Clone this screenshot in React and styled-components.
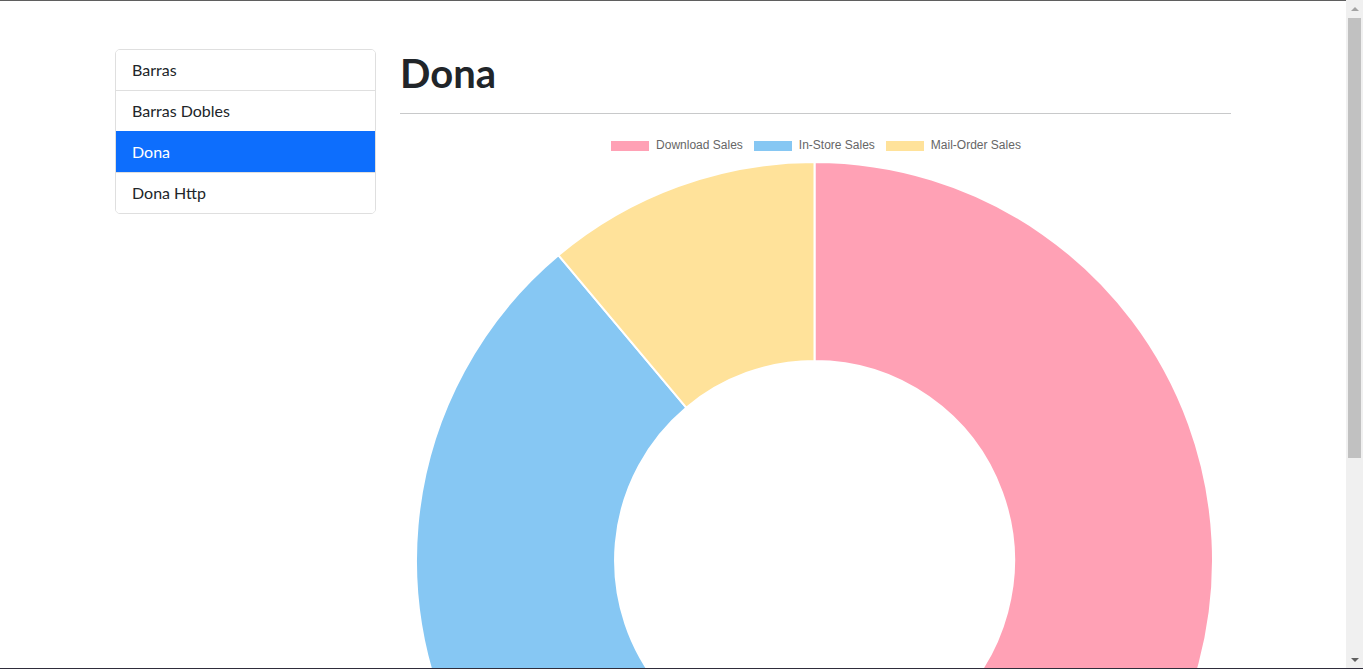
import React from "react";
import styled, { createGlobalStyle } from "styled-components";

const GlobalStyle = createGlobalStyle`
  *, *::before, *::after { box-sizing: border-box; }
  html { background: #fff; }
  body {
    margin: 0;
    padding-right: 17px;
    border-top: 1px solid #5f5f5f;
    font-family: "Lato", "Noto Sans", sans-serif;
    font-size: 16px;
    line-height: 1.5;
    color: #212529;
    background: #fff;
  }
`;

/* Window chrome seen in the screenshot: classic scrollbar + bottom frame edge */
const ScrollTrack = styled.div`
  position: fixed;
  top: 0;
  right: 0;
  bottom: 1px;
  width: 17px;
  background: #f0f0f0;
  display: flex;
  flex-direction: column;
  z-index: 10;
`;

const ScrollButton = styled.div`
  flex: 0 0 17px;
  display: flex;
  align-items: center;
  justify-content: center;
  &::before {
    content: "";
    width: 0;
    height: 0;
    border-left: 4px solid transparent;
    border-right: 4px solid transparent;
    ${(p) =>
      p.$down
        ? "border-top: 4px solid #606060;"
        : "border-bottom: 4px solid #a3a3a3;"}
  }
`;

const ScrollThumb = styled.div`
  height: 440px;
  margin: 1px 2px 0;
  background: #c1c1c1;
`;

const ScrollSpacer = styled.div`
  flex: 1;
`;

const FrameEdge = styled.div`
  position: fixed;
  left: 0;
  right: 0;
  bottom: 0;
  height: 1px;
  background: #2f2d3b;
  z-index: 11;
`;

const Container = styled.div`
  width: 100%;
  max-width: 1140px;
  margin: 48px auto 0;
  padding: 0 12px;
`;

const Row = styled.div`
  display: flex;
  margin: 0 -12px;
`;

const Col = styled.div`
  flex: 0 0 ${(p) => p.$span}%;
  max-width: ${(p) => p.$span}%;
  padding: 0 12px;
`;

const ListGroup = styled.ul`
  list-style: none;
  margin: 0;
  padding: 0;
  border: 1px solid #dfdfdf;
  border-radius: 5px;
  overflow: hidden;
`;

const ListItem = styled.li`
  padding: 8px 16px;
  font-size: 16px;
  line-height: 24px;
  cursor: pointer;
  color: ${(p) => (p.$active ? "#fff" : "#212529")};
  background: ${(p) => (p.$active ? "#0d6efd" : "#fff")};
  border-top: 1px solid ${(p) => (p.$active ? "#0d6efd" : "#dfdfdf")};
  &:first-child { border-top: 0; }
`;

const Title = styled.h1`
  margin: 0 0 8px;
  font-size: 40px;
  font-weight: 700;
  line-height: 1.2;
  color: #212529;
`;

const Divider = styled.hr`
  margin: 16px 0;
  border: 0;
  border-top: 1px solid #c8c9ca;
`;

const ChartBox = styled.div`
  width: 100%;
`;

const Legend = styled.div`
  display: flex;
  justify-content: center;
  gap: 10px;
  padding: 10px 0;
  height: 32px;
`;

const LegendItem = styled.div`
  display: flex;
  align-items: flex-start;
  height: 12px;
  font-family: "Liberation Sans", Arial, sans-serif;
  font-size: 12px;
  color: #666;
`;

const LegendLabel = styled.span`
  display: block;
  line-height: 10px;
`;

const Swatch = styled.span`
  display: block;
  width: 38px;
  height: 10px;
  margin: 1px 7px 1px 1px;
  background: ${(p) => p.$color};
`;

const ChartSvg = styled.svg`
  display: block;
  width: 100%;
  height: 799px;
`;

const data = [
  { label: "Download Sales", value: 350, color: "#ffa1b5" },
  { label: "In-Store Sales", value: 450, color: "#86c7f3" },
  { label: "Mail-Order Sales", value: 100, color: "#ffe29a" },
];

function arcPath(cx, cy, rO, rI, a0, a1) {
  const rad = (d) => (d * Math.PI) / 180;
  const p = (r, a) => [cx + r * Math.cos(rad(a)), cy + r * Math.sin(rad(a))];
  const large = a1 - a0 > 180 ? 1 : 0;
  const [x0, y0] = p(rO, a0);
  const [x1, y1] = p(rO, a1);
  const [x2, y2] = p(rI, a1);
  const [x3, y3] = p(rI, a0);
  return `M${x0} ${y0} A${rO} ${rO} 0 ${large} 1 ${x1} ${y1} L${x2} ${y2} A${rI} ${rI} 0 ${large} 0 ${x3} ${y3} Z`;
}

function Doughnut() {
  const W = 831;
  const cx = W / 2 - 1;
  const cy = 398.5;
  const rO = 398.5;
  const rI = 199.5;
  const total = data.reduce((s, d) => s + d.value, 0);
  let angle = -90;
  const slices = data.map((d) => {
    const sweep = (d.value / total) * 360;
    const path = arcPath(cx, cy, rO, rI, angle, angle + sweep);
    angle += sweep;
    return { ...d, path };
  });
  return (
    <ChartSvg viewBox={`0 0 ${W} 799`} preserveAspectRatio="xMidYMin meet">
      {slices.map((s) => (
        <path key={s.label} d={s.path} fill={s.color} stroke="#fff" strokeWidth="2" strokeLinejoin="round" />
      ))}
    </ChartSvg>
  );
}

const items = ["Barras", "Barras Dobles", "Dona", "Dona Http"];

export default function App() {
  return (
    <>
      <GlobalStyle />
      <Container>
        <Row>
          <Col $span={25}>
            <ListGroup>
              {items.map((it) => (
                <ListItem key={it} $active={it === "Dona"}>
                  {it}
                </ListItem>
              ))}
            </ListGroup>
          </Col>
          <Col $span={75}>
            <Title>Dona</Title>
            <Divider />
            <ChartBox>
              <Legend>
                {data.map((d) => (
                  <LegendItem key={d.label}>
                    <Swatch $color={d.color} />
                    <LegendLabel>{d.label}</LegendLabel>
                  </LegendItem>
                ))}
              </Legend>
              <Doughnut />
            </ChartBox>
          </Col>
        </Row>
      </Container>
      <ScrollTrack aria-hidden="true">
        <ScrollButton />
        <ScrollThumb />
        <ScrollSpacer />
        <ScrollButton $down />
      </ScrollTrack>
      <FrameEdge />
    </>
  );
}
